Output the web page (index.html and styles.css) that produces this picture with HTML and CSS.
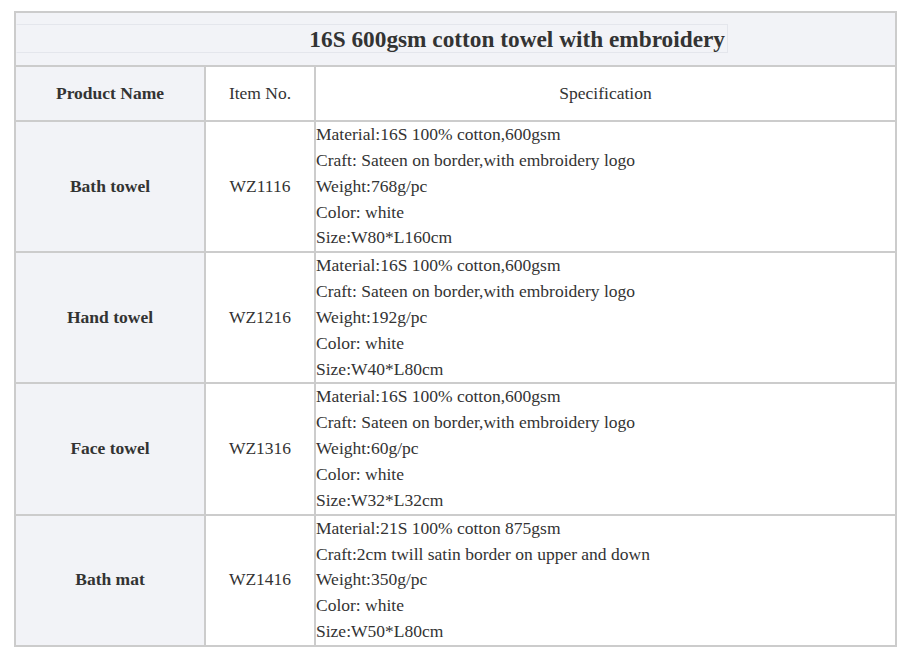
FILE: index.html
```html
<!DOCTYPE html>
<html>
<head>
<meta charset="utf-8">
<link rel="stylesheet" href="styles.css">
</head>
<body>
<div class="wrap">
<table class="spec-table">
  <colgroup>
    <col class="c1">
    <col class="c2">
    <col class="c3">
  </colgroup>
  <tr>
    <td class="title-cell" colspan="3"><div class="title-box">16S 600gsm cotton towel with embroidery</div></td>
  </tr>
  <tr class="head-row">
    <td class="name">Product Name</td>
    <td class="item">Item No.</td>
    <td class="head-spec">Specification</td>
  </tr>
  <tr class="data-row">
    <td class="name">Bath towel</td>
    <td class="item">WZ1116</td>
    <td class="spec">Material:16S 100% cotton,600gsm<br>Craft: Sateen on border,with embroidery logo<br>Weight:768g/pc<br>Color: white<br>Size:W80*L160cm</td>
  </tr>
  <tr class="data-row">
    <td class="name">Hand towel</td>
    <td class="item">WZ1216</td>
    <td class="spec">Material:16S 100% cotton,600gsm<br>Craft: Sateen on border,with embroidery logo<br>Weight:192g/pc<br>Color: white<br>Size:W40*L80cm</td>
  </tr>
  <tr class="data-row">
    <td class="name">Face towel</td>
    <td class="item">WZ1316</td>
    <td class="spec">Material:16S 100% cotton,600gsm<br>Craft: Sateen on border,with embroidery logo<br>Weight:60g/pc<br>Color: white<br>Size:W32*L32cm</td>
  </tr>
  <tr class="data-row">
    <td class="name">Bath mat</td>
    <td class="item">WZ1416</td>
    <td class="spec">Material:21S 100% cotton 875gsm<br>Craft:2cm twill satin border on upper and down<br>Weight:350g/pc<br>Color: white<br>Size:W50*L80cm</td>
  </tr>
</table>
</div>
</body>
</html>
```

FILE: styles.css
```css
html, body {
  margin: 0;
  padding: 0;
  background: #ffffff;
}

.wrap {
  padding: 11px 0 0 14px;
}

.spec-table {
  width: 883px;
  table-layout: fixed;
  border-collapse: separate;
  border-spacing: 0;
  border: 1px solid #cccccc;
  font-family: "Liberation Serif", "Times New Roman", serif;
  font-size: 17.5px;
  color: #333333;
}

.c1 { width: 190px; }
.c2 { width: 110px; }
.c3 { width: 581px; }

.spec-table td {
  border: 1px solid #cccccc;
  padding: 0;
  line-height: 25.85px;
}

.title-cell {
  background: #f2f3f7;
  height: 54px;
  box-sizing: border-box;
  vertical-align: top;
}

.title-box {
  width: 708px;
  height: 27px;
  margin: 11px 0 0 0;
  border: 1px solid #e4e6ec;
  border-left-color: #f2f3f7;
  text-align: right;
  padding-right: 2px;
  font-weight: bold;
  font-size: 23.3px;
  line-height: 28px;
  color: #333333;
}

.head-row td {
  height: 53px;
}

.name {
  background: #f2f3f7;
  font-weight: bold;
  text-align: center;
  vertical-align: middle;
}

.item {
  background: #ffffff;
  text-align: center;
  vertical-align: middle;
}

.head-spec {
  text-align: center;
  vertical-align: middle;
}

.spec {
  text-align: left;
  vertical-align: top;
}
```
